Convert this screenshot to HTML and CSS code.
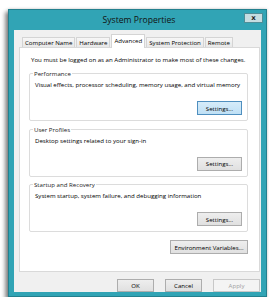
FILE: index.html
```html
<!DOCTYPE html>
<html lang="en">
<head>
  <meta charset="UTF-8" />
  <title>System Properties</title>
  <link rel="stylesheet" href="styles.css">
</head>
<body>

<div class="window">
  <div class="titlebar">
    <span class="title">System Properties</span>
    <div class="close">x</div>
  </div>

  <div class="body">
    <div class="tabs">
      <div class="tab">Computer Name</div>
      <div class="tab">Hardware</div>
      <div class="tab active">Advanced</div>
      <div class="tab">System Protection</div>
      <div class="tab">Remote</div>
    </div>

    <div class="panel">
      <p class="note">You must be logged on as an Administrator to make most of these changes.</p>

      <fieldset class="group">
        <legend>Performance</legend>
        <p class="desc">Visual effects, processor scheduling, memory usage, and virtual memory</p>
        <div class="actions"><button class="btn settings hover">Settings...</button></div>
      </fieldset>

      <fieldset class="group">
        <legend>User Profiles</legend>
        <p class="desc">Desktop settings related to your sign-in</p>
        <div class="actions"><button class="btn settings">Settings...</button></div>
      </fieldset>

      <fieldset class="group">
        <legend>Startup and Recovery</legend>
        <p class="desc">System startup, system failure, and debugging information</p>
        <div class="actions"><button class="btn settings">Settings...</button></div>
      </fieldset>

      <div class="actions env"><button class="btn">Environment Variables...</button></div>
    </div>

    <div class="footer">
      <button class="btn dlg">OK</button>
      <button class="btn dlg">Cancel</button>
      <button class="btn dlg apply" disabled>Apply</button>
    </div>
  </div>
</div>

</body>
</html>
```

FILE: styles.css
```css
body {
  margin: 0;
  padding: 9px 0 0 8px;
  background: #fff;
  font-family: "Open Sans", "Noto Sans", sans-serif;
  font-size: 6.1px;
  color: #000;
}

.window {
  position: relative;
  width: 259px;
  height: 288px;
  box-sizing: border-box;
  background: #31a4b5;
  border: 1px solid #23808e;
  padding: 0 5px 4px 5px;
  display: flex;
  flex-direction: column;
  box-shadow: -3px 3px 4px rgba(0,0,0,0.45), 0 0 3px rgba(0,0,0,0.2);
}

.titlebar {
  height: 20px;
  display: flex;
  align-items: center;
  justify-content: center;
}

.title {
  font-size: 8.6px;
  color: #111;
  margin-left: 3px;
}

.close {
  position: absolute;
  top: 3px;
  right: 3px;
  width: 19px;
  height: 10px;
  box-sizing: border-box;
  background: #c6dde1;
  border: 1px solid #4f8e98;
  font-family: "DejaVu Sans", sans-serif;
  font-weight: bold;
  font-size: 7px;
  line-height: 8px;
  text-align: center;
  color: #222;
}

.body {
  flex: 1;
  background: #f0f0f0;
  padding: 4px 1px 0 5px;
  display: flex;
  flex-direction: column;
}

.tabs {
  display: flex;
  align-items: flex-end;
  height: 13px;
  padding-left: 3px;
}

.tab {
  height: 10px;
  box-sizing: border-box;
  padding: 0 2px;
  margin-right: 1px;
  border: 1px solid #d4d4d4;
  border-bottom: none;
  background: linear-gradient(#f6f6f6, #e8e8e8);
  line-height: 9px;
  white-space: nowrap;
}

.tab.active {
  height: 14px;
  margin-bottom: -1px;
  position: relative;
  background: #fff;
  line-height: 11px;
}

.panel {
  flex: 1;
  background: #fff;
  border: 1px solid #d9d9d9;
  padding: 7px 11px 0 9px;
  display: flex;
  flex-direction: column;
}

.note {
  margin: 0 0 5px 2px;
  line-height: 9px;
  white-space: nowrap;
}

.group {
  margin: 0 0 3.5px 0;
  padding: 0 5px 5px 5px;
  border: 1px solid #dcdcdc;
  border-radius: 2px;
  min-width: 0;
}

.group legend {
  padding: 0 1px;
  margin-left: -2px;
  line-height: 9px;
  color: #222;
}

.desc {
  margin: 2px 0 0 0;
  line-height: 9px;
  white-space: nowrap;
}

.actions {
  display: flex;
  justify-content: flex-end;
}

.group .actions {
  margin-top: 12px;
}

.btn {
  height: 14px;
  box-sizing: border-box;
  padding: 0;
  border: 1px solid #adadad;
  background: linear-gradient(#eeeeee, #e0e0e0);
  font-family: inherit;
  font-size: 6.1px;
  color: #000;
  white-space: nowrap;
}

.btn.settings {
  width: 45px;
}

.btn.hover {
  background: linear-gradient(#d6ecfa, #bfe0f5);
  border-color: #4f8fbf;
}

.env {
  margin-top: 4.5px;
}

.env .btn {
  width: 78px;
}

.footer {
  display: flex;
  justify-content: flex-end;
  gap: 11px;
  padding-top: 7px;
}

.btn.dlg {
  width: 37px;
  height: 13px;
}

.btn.apply {
  width: 47px;
  background: #f4f4f4;
  border-color: #c8c8c8;
  color: #a0a0a0;
}
```
